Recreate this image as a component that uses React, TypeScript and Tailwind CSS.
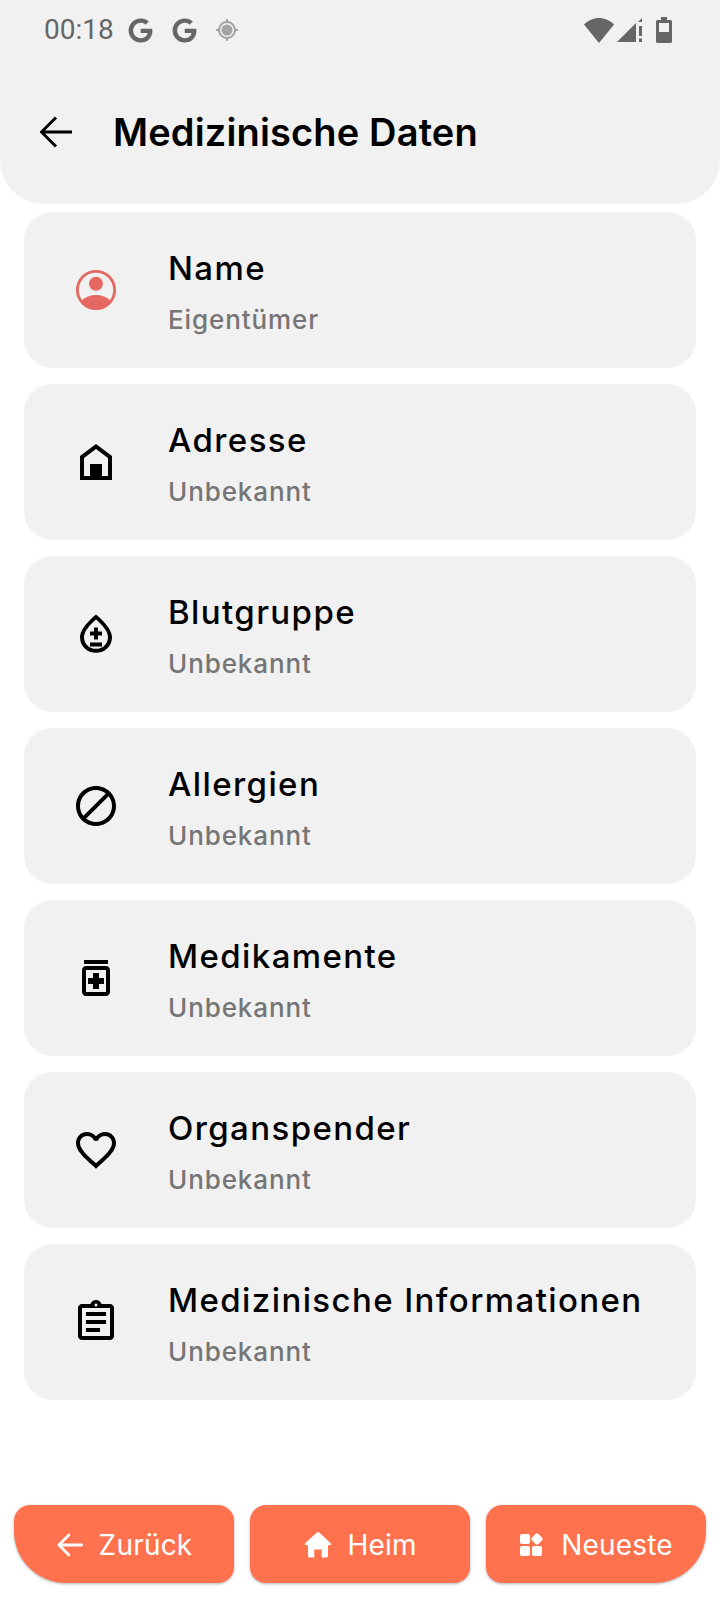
import React from "react";
import { FaGoogle } from "react-icons/fa";

const Mat = ({ d, className = "", evenodd = false, children }: { d?: string; className?: string; evenodd?: boolean; children?: React.ReactNode }) => (
  <svg viewBox="0 0 24 24" className={className} fill="currentColor">
    {d && <path d={d} fillRule={evenodd ? "evenodd" : "nonzero"} />}
    {children}
  </svg>
);

const icons: Record<string, React.ReactNode> = {
  name: (
    <Mat className="w-12 h-12 text-[#e56862]">
      <circle cx="12" cy="12" r="9.3" fill="none" stroke="currentColor" strokeWidth="1.4" />
      <circle cx="12" cy="8.9" r="3.5" />
      <path d="M4.800 17.300C6.600 15.500 9.200 14.500 12 14.500s5.400 1 7.200 2.800C17.600 20.200 15 21.800 12 21.800s-5.600-1.600-7.200-4.500z" />
    </Mat>
  ),
  home: (
    <Mat className="w-12 h-12 text-black">
      <path fillRule="evenodd" d="M12 3L4 9v12h16V9l-8-6zm6 16H6v-9l6-4.500 6 4.500v9z" />
      <path d="M9 13h6v7H9z" />
    </Mat>
  ),
  blood: (
    <Mat className="w-12 h-12 text-black" evenodd d="M12 2.200C6.670 6.700 4 10.500 4 13.600 4 18.300 7.800 21.400 12 21.400s8-3.100 8-7.800C20 10.500 17.330 6.700 12 2.200zm0 17.200c-3.350 0-6-2.400-6-5.800 0-2.300 1.950-5.300 6-8.800 4.050 3.500 6 6.500 6 8.800 0 3.400-2.650 5.800-6 5.800zM9 16.250h6v2H9zM11 8.750h2v2h2v2h-2v2h-2v-2H9v-2h2z" />
  ),
  block: (
    <Mat className="w-12 h-12 text-black" d="M12 2C6.480 2 2 6.480 2 12s4.480 10 10 10 10-4.480 10-10S17.520 2 12 2zM4 12c0-4.420 3.580-8 8-8 1.850 0 3.550.630 4.900 1.690L5.690 16.900C4.630 15.550 4 13.850 4 12zm8 8c-1.850 0-3.550-.630-4.900-1.690L18.310 7.100C19.370 8.450 20 10.150 20 12c0 4.420-3.580 8-8 8z" />
  ),
  med: (
    <Mat className="w-12 h-12 text-black" d="M6 3h12v2H6zm11 3H7c-1.100 0-2 .900-2 2v11c0 1.100.900 2 2 2h10c1.100 0 2-.900 2-2V8c0-1.100-.900-2-2-2zm0 13H7V8h10v11zm-6.500-1.500h3V15H16v-3h-2.500V9.500h-3V12H8v3h2.500z" />
  ),
  heart: (
    <Mat className="w-12 h-12 text-black" d="M16.500 3c-1.740 0-3.410.810-4.500 2.090C10.910 3.810 9.240 3 7.500 3 4.420 3 2 5.420 2 8.500c0 3.780 3.400 6.860 8.550 11.540L12 21.350l1.450-1.320C18.600 15.360 22 12.280 22 8.500 22 5.420 19.580 3 16.500 3zm-4.400 15.550l-.1.100-.1-.100C7.140 14.240 4 11.390 4 8.500 4 6.500 5.500 5 7.500 5c1.540 0 3.040.990 3.570 2.360h1.870C13.460 5.990 14.960 5 16.500 5c2 0 3.500 1.500 3.500 3.500 0 2.890-3.140 5.740-7.900 10.050z" />
  ),
  clip: (
    <Mat className="w-12 h-12 text-black" d="M7 15h7v2H7zm0-4h10v2H7zm0-4h10v2H7zm12-4h-4.180C14.400 1.840 13.300 1 12 1c-1.300 0-2.400.840-2.820 2H5c-.140 0-.270.010-.400.040-.390.080-.740.280-1.010.550-.180.180-.330.400-.430.640-.100.230-.160.490-.160.770v14c0 .270.060.540.160.780s.250.450.430.640c.270.270.620.470 1.010.550.130.020.260.030.400.030h14c1.100 0 2-.900 2-2V5c0-1.100-.900-2-2-2zm-7-.250c.410 0 .750.340.750.750s-.340.750-.750.750-.750-.340-.750-.750.340-.750.750-.750zM19 19H5V5h14v14z" />
  ),
};

const rows = [
  { icon: "name", title: "Name", sub: "Eigentümer" },
  { icon: "home", title: "Adresse", sub: "Unbekannt" },
  { icon: "blood", title: "Blutgruppe", sub: "Unbekannt" },
  { icon: "block", title: "Allergien", sub: "Unbekannt" },
  { icon: "med", title: "Medikamente", sub: "Unbekannt" },
  { icon: "heart", title: "Organspender", sub: "Unbekannt" },
  { icon: "clip", title: "Medizinische Informationen", sub: "Unbekannt" },
];

const Row = ({ icon, title, sub }: { icon: string; title: string; sub: string }) => (
  <div className="h-[156px] rounded-[28px] bg-[#f1f1f1] flex items-center pl-12">
    <div className="shrink-0">{icons[icon]}</div>
    <div className="ml-12 flex flex-col pt-[2px]">
      <div className="text-[33px] leading-[40px] font-medium text-black tracking-[1.4px] whitespace-nowrap">{title}</div>
      <div className="mt-[17px] text-[26px] leading-[30px] font-medium text-[#757575] tracking-[0.9px]">{sub}</div>
    </div>
  </div>
);

export default function App() {
  return (
    <div className="w-[720px] h-[1600px] bg-white flex flex-col font-['Inter',sans-serif]">
      <header className="h-[204px] shrink-0 bg-[#f1f1f1] rounded-b-[44px] flex flex-col">
        <div className="h-[60px] flex items-center pl-[44px] pr-[48px] text-[#666666]">
          <span className="font-['Roboto',sans-serif] text-[28px] leading-none">00:18</span>
          <FaGoogle className="ml-[14px] w-[25px] h-[25px]" />
          <FaGoogle className="ml-[19px] w-[25px] h-[25px]" />
          <svg viewBox="0 0 24 24" className="ml-[18px] w-[24px] h-[24px] text-[#a3a3a3]" fill="currentColor">
            <path d="M12 6.500a5.500 5.500 0 100 11 5.500 5.500 0 000-11zm8.940 4.500A8.990 8.990 0 0013 3.060V1h-2v2.060A8.990 8.990 0 003.060 11H1v2h2.060A8.990 8.990 0 0011 20.940V23h2v-2.060A8.990 8.990 0 0020.940 13H23v-2h-2.060zM12 19a7 7 0 110-14 7 7 0 010 14z" />
          </svg>
          <div className="ml-auto flex items-center">
            <svg viewBox="0 0 30 26" className="w-[30px] h-[26px]" fill="currentColor">
              <path d="M0 7.500C4 3.500 9.500 1 15 1s11 2.500 15 6.500L15 26z" />
            </svg>
            <svg viewBox="0 0 26 26" className="ml-[3px] w-[26px] h-[26px]" fill="currentColor">
              <path d="M0 25L19 6v19z" />
              <path d="M25 1v4h-4z" />
              <path d="M22 9h3v10h-3zM22 21.500h3V25h-3z" />
            </svg>
            <svg viewBox="0 0 16 26" className="ml-[13px] w-[16px] h-[26px]" fill="currentColor">
              <path fillRule="evenodd" d="M5 0h6v3h3.500a1.500 1.500 0 011.500 1.500v20a1.500 1.500 0 01-1.500 1.500h-13A1.500 1.500 0 010 24.500v-20A1.500 1.500 0 011.500 3H5zM3 6v9h10V6z" />
            </svg>
          </div>
        </div>
        <div className="mt-[50px] flex items-center pl-[40px]">
          <svg viewBox="0 0 32 32" className="w-[32px] h-[32px] text-black" fill="none" stroke="currentColor" strokeWidth="3">
            <path d="M32 16H2M16 1.500L1.500 16 16 30.500" />
          </svg>
          <h1 className="ml-[41px] text-[38px] leading-[44px] font-semibold text-black tracking-[0.15px]">Medizinische Daten</h1>
        </div>
      </header>
      <main className="mt-2 mx-6 flex flex-col gap-4">
        {rows.map((r) => (
          <Row key={r.title} {...r} />
        ))}
      </main>
      <footer className="mt-auto mb-[17px] mx-[14px] grid grid-cols-3 gap-4">
        <button className="h-[78px] bg-[#ff724d] rounded-[16px] rounded-bl-[52px] shadow-[0_1px_3px_rgba(0,0,0,0.3)] flex items-center justify-center text-white text-[28px] tracking-[0.2px] pt-[1px]">
          <svg viewBox="0 0 24 24" className="w-[28px] h-[28px] mr-[15px]" fill="none" stroke="currentColor" strokeWidth="2.4" strokeLinecap="round" strokeLinejoin="round">
            <path d="M22 12H3M11 3.500L2.500 12l8.500 8.500" />
          </svg>
          Zurück
        </button>
        <button className="h-[78px] bg-[#ff724d] rounded-[16px] shadow-[0_1px_3px_rgba(0,0,0,0.3)] flex items-center justify-center text-white text-[28px] tracking-[0.2px] pt-[1px]">
          <svg viewBox="0 0 24 24" className="w-[30px] h-[30px] mr-[14px]" fill="currentColor">
            <path d="M12 1.500a1.500 1.500 0 00-1 .4L1.800 10.500c-.7.6-.3 1.600.6 1.600H4v8.400c0 .8.700 1.500 1.500 1.500H9v-6.500h6V22h3.500c.8 0 1.500-.7 1.500-1.500v-8.400h1.600c.9 0 1.300-1 .6-1.600L13 1.900a1.500 1.500 0 00-1-.4z" />
          </svg>
          Heim
        </button>
        <button className="h-[78px] bg-[#ff724d] rounded-[16px] rounded-br-[52px] shadow-[0_1px_3px_rgba(0,0,0,0.3)] flex items-center justify-center text-white text-[28px] tracking-[0.2px] pt-[1px]">
          <svg viewBox="0 0 24 24" className="w-[24px] h-[24px] mr-[18px]" fill="currentColor">
            <rect x="1" y="1" width="10" height="10" rx="2" />
            <rect x="1" y="13" width="10" height="10" rx="2" />
            <rect x="13" y="13" width="10" height="10" rx="2" />
            <rect x="13.500" y="1.500" width="9" height="9" rx="2" transform="rotate(45 18 6)" />
          </svg>
          Neueste
        </button>
      </footer>
    </div>
  );
}
